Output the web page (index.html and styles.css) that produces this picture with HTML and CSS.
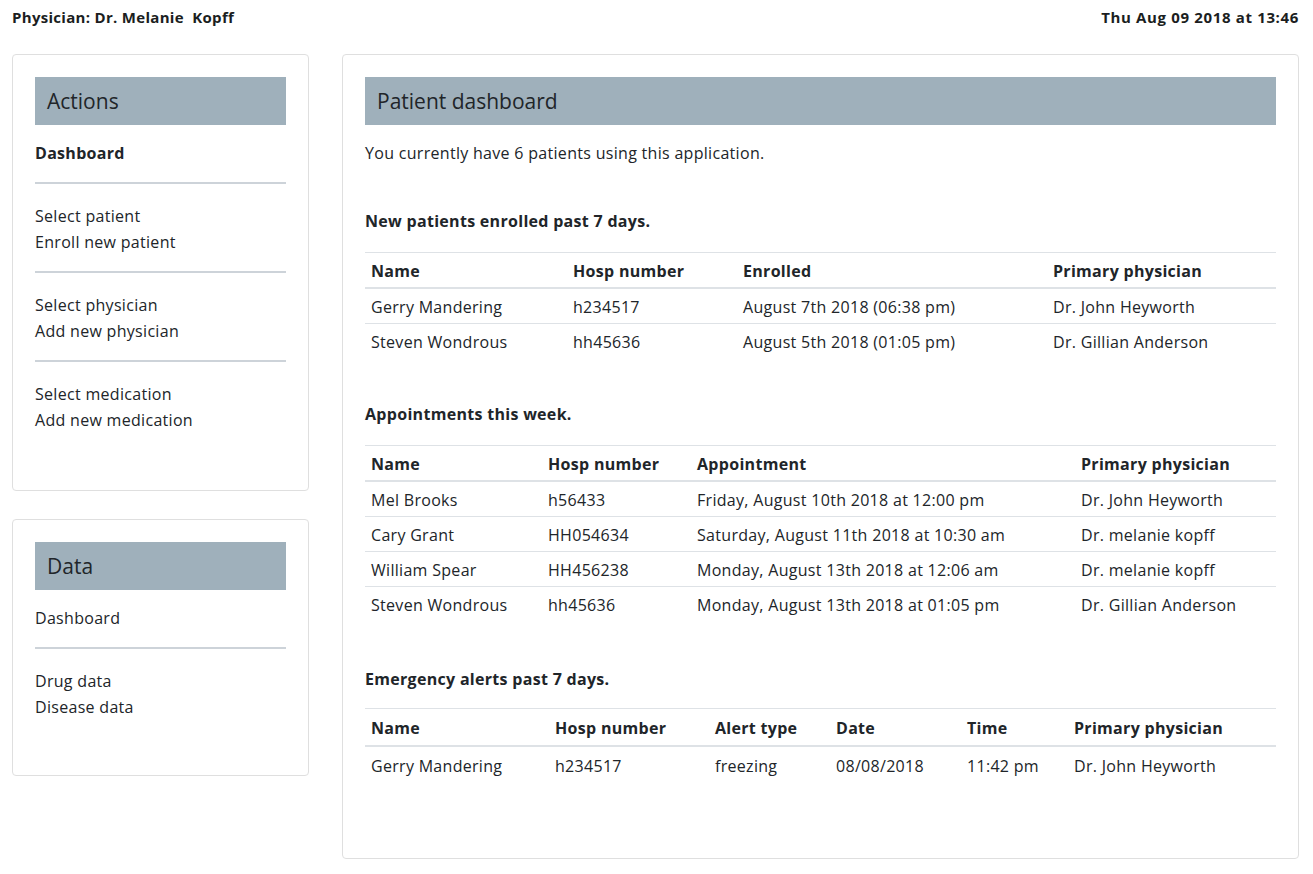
FILE: index.html
```html
<!DOCTYPE html>
<html lang="en">
<head>
<meta charset="utf-8">
<title>Patient dashboard</title>
<link rel="stylesheet" href="styles.css">
</head>
<body>
<header class="topbar">
  <div class="who">Physician: Dr. Melanie &nbsp;Kopff</div>
  <div class="when">Thu Aug 09 2018 at 13:46</div>
</header>
<div class="layout">
  <aside class="side">
    <section class="card side-card">
      <h4 class="bar">Actions</h4>
      <div class="group first"><span class="strong">Dashboard</span></div>
      <hr class="rule">
      <div class="group"><a>Select patient</a><a>Enroll new patient</a></div>
      <hr class="rule">
      <div class="group"><a>Select physician</a><a>Add new physician</a></div>
      <hr class="rule">
      <div class="group"><a>Select medication</a><a>Add new medication</a></div>
    </section>
    <section class="card side-card side-card-short">
      <h4 class="bar">Data</h4>
      <div class="group first"><a>Dashboard</a></div>
      <hr class="rule">
      <div class="group"><a>Drug data</a><a>Disease data</a></div>
    </section>
  </aside>
  <main class="card main-card">
    <h4 class="bar">Patient dashboard</h4>
    <p class="intro">You currently have 6 patients using this application.</p>

    <h6 class="title">New patients enrolled past 7 days.</h6>
    <table class="tbl">
      <colgroup><col class="c1a"><col class="c1b"><col class="c1c"><col class="c1d"></colgroup>
      <thead><tr><th>Name</th><th>Hosp number</th><th>Enrolled</th><th>Primary physician</th></tr></thead>
      <tbody>
        <tr><td>Gerry Mandering</td><td>h234517</td><td>August 7th 2018 (06:38 pm)</td><td>Dr. John Heyworth</td></tr>
        <tr><td>Steven Wondrous</td><td>hh45636</td><td>August 5th 2018 (01:05 pm)</td><td>Dr. Gillian Anderson</td></tr>
      </tbody>
    </table>

    <h6 class="title">Appointments this week.</h6>
    <table class="tbl">
      <colgroup><col class="c2a"><col class="c2b"><col class="c2c"><col class="c2d"></colgroup>
      <thead><tr><th>Name</th><th>Hosp number</th><th>Appointment</th><th>Primary physician</th></tr></thead>
      <tbody>
        <tr><td>Mel Brooks</td><td>h56433</td><td>Friday, August 10th 2018 at 12:00 pm</td><td>Dr. John Heyworth</td></tr>
        <tr><td>Cary Grant</td><td>HH054634</td><td>Saturday, August 11th 2018 at 10:30 am</td><td>Dr. melanie kopff</td></tr>
        <tr><td>William Spear</td><td>HH456238</td><td>Monday, August 13th 2018 at 12:06 am</td><td>Dr. melanie kopff</td></tr>
        <tr><td>Steven Wondrous</td><td>hh45636</td><td>Monday, August 13th 2018 at 01:05 pm</td><td>Dr. Gillian Anderson</td></tr>
      </tbody>
    </table>

    <h6 class="title title-last">Emergency alerts past 7 days.</h6>
    <table class="tbl tbl-roomy">
      <colgroup><col class="c3a"><col class="c3b"><col class="c3c"><col class="c3d"><col class="c3e"><col class="c3f"></colgroup>
      <thead><tr><th>Name</th><th>Hosp number</th><th>Alert type</th><th>Date</th><th>Time</th><th>Primary physician</th></tr></thead>
      <tbody>
        <tr><td>Gerry Mandering</td><td>h234517</td><td>freezing</td><td>08/08/2018</td><td>11:42 pm</td><td>Dr. John Heyworth</td></tr>
      </tbody>
    </table>
  </main>
</div>
</body>
</html>
```
FILE: styles.css
```css
* { box-sizing: border-box; }
html, body { margin: 0; padding: 0; background: #fff; }
body {
  font-family: "Open Sans", "Noto Sans", "Liberation Sans", sans-serif;
  font-size: 16px;
  letter-spacing: 0.3px;
  color: #212529;
  line-height: 24px;
}
.topbar {
  display: flex;
  justify-content: space-between;
  padding: 6px 14px 0 12px;
  height: 54px;
  font-weight: 700;
  font-size: 15px;
  line-height: 22px;
  color: #1b1e21;
}
.when { letter-spacing: 0.65px; }
.layout {
  display: grid;
  grid-template-columns: 297px 957px;
  column-gap: 33px;
  padding-left: 12px;
  align-items: start;
}
.side { display: flex; flex-direction: column; gap: 28px; }
.card {
  border: 1px solid #dfdfdf;
  border-radius: 4px;
  background: #fff;
  padding: 22px;
}
.side-card { padding-bottom: 57px; }
.side-card-short { padding-bottom: 55px; }
.main-card { min-height: 805px; padding-bottom: 40px; }
.bar {
  margin: 0;
  height: 48px;
  background: #9fb0bb;
  padding: 1px 12px 0;
  font-size: 21px;
  font-weight: 500;
  letter-spacing: 0;
  line-height: 47px;
  color: #212529;
}
.group { display: flex; flex-direction: column; line-height: 26px; }
.group.first { margin-top: 15px; }
.group a { color: #212529; text-decoration: none; }
.strong { font-weight: 700; }
.rule {
  margin: 16px 0 19px;
  border: 0;
  height: 2px;
  background: #cdd3d9;
}
.intro { margin: 15px 0 0; line-height: 26px; }
.title {
  margin: 42px 0 18px;
  font-size: 16px;
  font-weight: 700;
  line-height: 26px;
}
.title-last { margin: 45px 0 16px; }
.tbl {
  width: 100%;
  table-layout: fixed;
  border-collapse: collapse;
}
.tbl th, .tbl td {
  text-align: left;
  padding: 6px 6px 4px;
  height: 35px;
  vertical-align: middle;
  border-top: 1px solid #dee2e6;
  white-space: nowrap;
}
.tbl th { font-weight: 700; height: 35px; border-bottom: 2px solid #dee2e6; }
.tbl tbody tr:first-child td { border-top: 0; }
.tbl-roomy th { height: 37px; }
.tbl-roomy td { height: 38px; }
.c1a { width: 202px; } .c1b { width: 170px; } .c1c { width: 310px; } .c1d { width: 229px; }
.c2a { width: 177px; } .c2b { width: 149px; } .c2c { width: 384px; } .c2d { width: 201px; }
.c3a { width: 184px; } .c3b { width: 160px; } .c3c { width: 121px; } .c3d { width: 131px; } .c3e { width: 107px; } .c3f { width: 208px; }
```
